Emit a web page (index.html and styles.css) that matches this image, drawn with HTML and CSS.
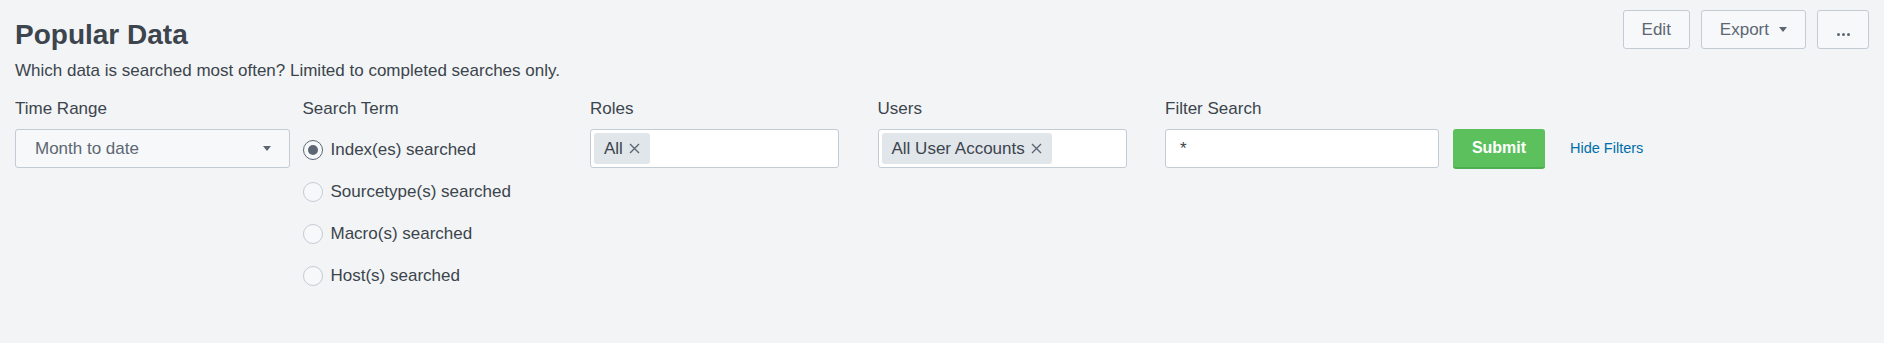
FILE: index.html
```html
<!DOCTYPE html>
<html lang="en">
<head>
    <meta charset="UTF-8">
    <meta name="viewport" content="width=device-width, initial-scale=1.0">
    <title>Popular Data</title>
    <link rel="stylesheet" href="styles.css">
</head>
<body>
    <header class="dash-head">
        <div class="dash-title">
            <h1>Popular Data</h1>
            <p class="description">Which data is searched most often? Limited to completed searches only.</p>
        </div>
        <div class="dash-actions">
            <button class="btn">Edit</button>
            <button class="btn">Export <span class="caret"></span></button>
            <button class="btn btn-more"><span class="dot"></span><span class="dot"></span><span class="dot"></span></button>
        </div>
    </header>

    <form class="fieldset">
        <div class="input">
            <label>Time Range</label>
            <div class="dropdown">
                <span>Month to date</span>
                <span class="caret"></span>
            </div>
        </div>

        <div class="input">
            <label>Search Term</label>
            <div class="radio-list">
                <div class="radio checked"><span class="circle"></span>Index(es) searched</div>
                <div class="radio"><span class="circle"></span>Sourcetype(s) searched</div>
                <div class="radio"><span class="circle"></span>Macro(s) searched</div>
                <div class="radio"><span class="circle"></span>Host(s) searched</div>
            </div>
        </div>

        <div class="input">
            <label>Roles</label>
            <div class="multiselect">
                <span class="tag">All <svg class="x" width="11" height="11" viewBox="0 0 11 11"><path d="M1 1L10 10M10 1L1 10"/></svg></span>
            </div>
        </div>

        <div class="input">
            <label>Users</label>
            <div class="multiselect">
                <span class="tag">All User Accounts <svg class="x" width="11" height="11" viewBox="0 0 11 11"><path d="M1 1L10 10M10 1L1 10"/></svg></span>
            </div>
        </div>

        <div class="input input-text">
            <label>Filter Search</label>
            <div class="text-box">*</div>
        </div>

        <button type="button" class="submit">Submit</button>
        <a class="hide-filters" href="#">Hide Filters</a>
    </form>
</body>
</html>
```

FILE: styles.css
```css
body{
    font-family: 'Liberation Sans', Arial, sans-serif;
    font-size: 17px;
    color: #3c444d;
    background-color: #f2f4f5;
    margin: 0;
    padding: 10px 15px 0;
}

.dash-head{
    display: flex;
    justify-content: space-between;
    align-items: flex-start;
}

h1{
    font-size: 28px;
    line-height: 34px;
    font-weight: 700;
    margin: 8px 0 0;
}

.description{
    font-size: 17px;
    line-height: 20px;
    margin: 9px 0 0;
}

.dash-actions{
    display: flex;
    gap: 11px;
}

.btn{
    display: flex;
    align-items: center;
    height: 39px;
    padding: 0 18px;
    font-family: inherit;
    font-size: 17px;
    color: #5c6773;
    background-color: #f7f8fa;
    border: 1px solid #c3cbd4;
    border-radius: 3px;
}

.btn .caret{
    margin-left: 10px;
}

.btn-more{
    width: 52px;
    justify-content: center;
    gap: 2px;
    padding: 0;
    padding-top: 10px;
}

.dot{
    width: 3px;
    height: 3px;
    border-radius: 50%;
    background-color: #5c6773;
}

.caret{
    display: inline-block;
    width: 0;
    height: 0;
    border-left: 4.5px solid transparent;
    border-right: 4.5px solid transparent;
    border-top: 5px solid #5c6773;
}

/* inputs */
.fieldset{
    display: flex;
    align-items: flex-start;
    margin-top: 18px;
}

.input{
    flex: 0 0 287.5px;
}

.input label{
    display: block;
    font-size: 17px;
    line-height: 20px;
    margin-bottom: 10px;
}

.dropdown{
    width: 275px;
    height: 39px;
    box-sizing: border-box;
    display: flex;
    align-items: center;
    justify-content: space-between;
    padding: 0 18px 0 19px;
    color: #5c6773;
    background-color: #f7f8fa;
    border: 1px solid #c3cbd4;
    border-radius: 3px;
}

.radio-list{
    display: flex;
    flex-direction: column;
}

.radio{
    display: flex;
    align-items: center;
    height: 42px;
}

.circle{
    width: 20px;
    height: 20px;
    box-sizing: border-box;
    border: 1px solid #c3cbd4;
    border-radius: 50%;
    background-color: #f7f8fa;
    margin-right: 8px;
    display: flex;
    align-items: center;
    justify-content: center;
}

.radio.checked .circle{
    border-color: #5c6773;
}

.radio.checked .circle::after{
    content: '';
    width: 10px;
    height: 10px;
    border-radius: 50%;
    background-color: #5c6773;
}

.multiselect{
    width: 249px;
    height: 39px;
    box-sizing: border-box;
    display: flex;
    align-items: center;
    padding: 0 3px;
    background-color: #fff;
    border: 1px solid #c3cbd4;
    border-radius: 3px;
}

.tag{
    display: flex;
    align-items: center;
    height: 31px;
    padding: 0 10px;
    background-color: #e1e6eb;
    border-radius: 3px;
}

.x{
    margin-left: 6px;
    stroke: #5c6773;
    stroke-width: 1.4;
    fill: none;
}

.input-text{
    flex: 0 0 auto;
}

.text-box{
    width: 274px;
    height: 39px;
    box-sizing: border-box;
    display: flex;
    align-items: center;
    padding: 0 14px;
    background-color: #fff;
    border: 1px solid #c3cbd4;
    border-radius: 3px;
}

.submit{
    margin: 30px 0 0 14px;
    width: 92px;
    height: 40px;
    font-family: inherit;
    font-size: 16px;
    font-weight: 700;
    color: #fff;
    background-color: #5cc05c;
    border: none;
    border-bottom: 2px solid #4fae4f;
    border-radius: 3px;
}

.hide-filters{
    margin: 30px 0 0 25px;
    line-height: 39px;
    font-size: 14.5px;
    color: #006eaa;
    text-decoration: none;
}
```
